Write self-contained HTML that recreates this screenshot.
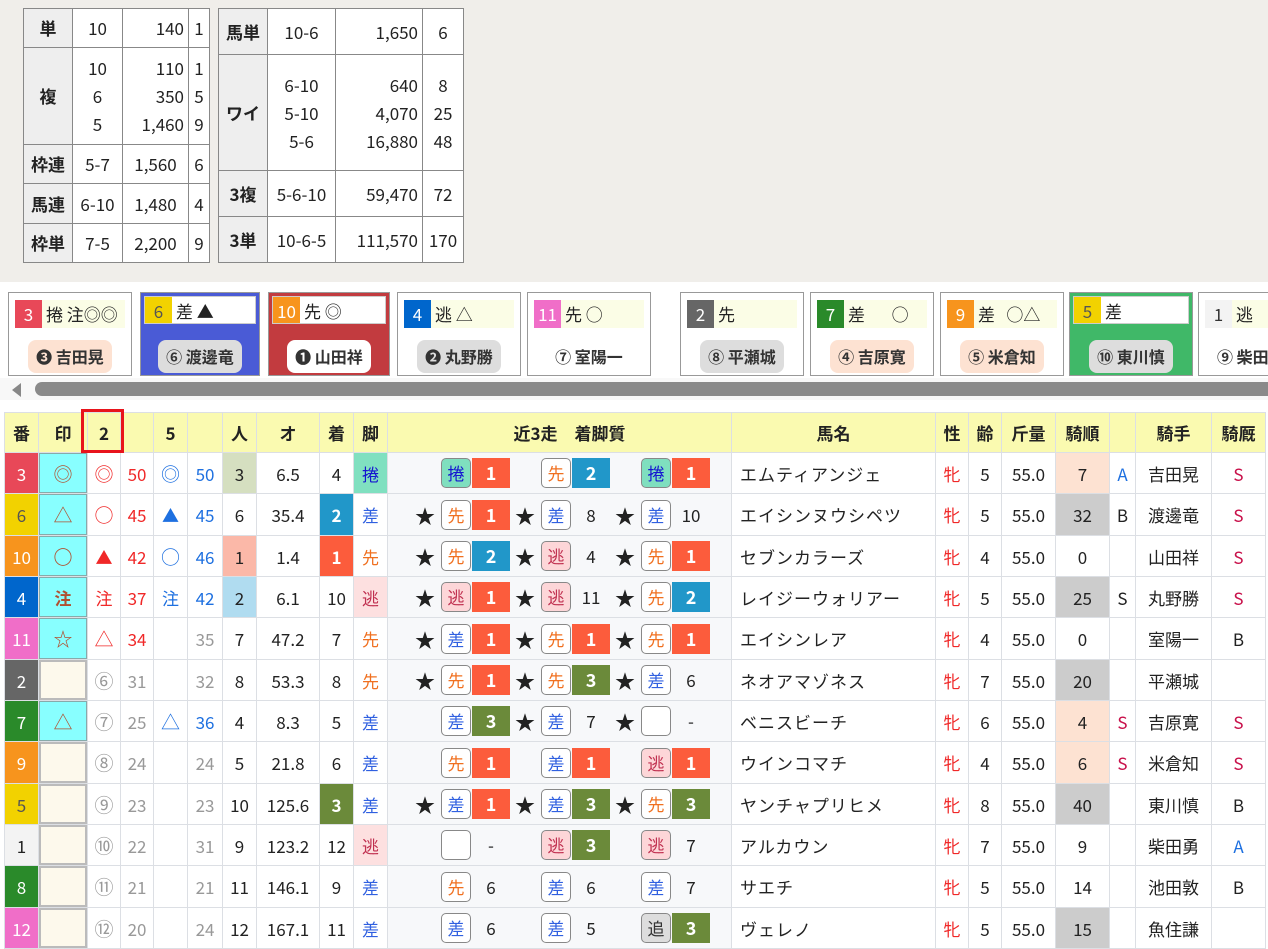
<!DOCTYPE html>
<html><head><meta charset="utf-8">
<style>
*{box-sizing:border-box;margin:0;padding:0}
body{width:1268px;height:949px;overflow:hidden;background:#fff;font-family:"Liberation Sans","Noto Sans CJK JP",sans-serif;color:#222;position:relative}
.top{position:absolute;left:0;top:0;width:1268px;height:282px;background:#f0eeea}
table.pay{position:absolute;top:8px;border-collapse:collapse;background:#fff;font-size:17px;font-family:"Noto Sans CJK JP",sans-serif}
table.pay td{border:1px solid #888;padding:0 4px;line-height:28px;text-align:center}
table.pay td.h{background:#eee;font-weight:bold;text-align:center}
table.pay td.rt{text-align:right}
.card{position:absolute;top:292px;width:124px;height:84px;border:1px solid #999;background:#fff;font-family:"Noto Sans CJK JP",sans-serif}
.card .strip{position:absolute;left:6px;top:7px;width:110px;height:28px;background:#fbfde6;font-size:17px;line-height:28px;white-space:nowrap;overflow:hidden}
.card.sel .strip{left:3px;top:3px;width:116px;background:#fff;border:1px solid #ccc}
.card .num{display:inline-block;width:27px;text-align:center;color:#fff;margin-right:4px}
.card .pill{position:absolute;left:0;right:0;top:47px;text-align:center}
.card .pill span{display:inline-block;height:33px;line-height:33px;padding:0 8px;border-radius:8px;font-size:16px;font-weight:bold;color:#333}
.scroll{position:absolute;left:0;top:378px;width:1268px;height:22px;background:#f8f8f8}
table.main{position:absolute;left:4px;top:412px;border-collapse:collapse;table-layout:fixed;font-family:"Noto Sans CJK JP",sans-serif;font-size:17px}
table.main td{border:1px solid #dcdfe4;text-align:center;padding:0;white-space:nowrap}
table.main tr.hd td{background:#fafab0;font-weight:bold;height:40px}
.hn{color:#fff}
.mk{background:#88ffff;box-shadow:inset 0 0 0 1px #8aa;color:#b05030;font-size:19px}
.em{background:#fdf9ec;box-shadow:inset 0 0 0 2px #bbb}
.red{color:#f02828}.blu{color:#1e70e0}.gry{color:#999}
.cn{font-size:19px}
.n3{background:#f7f8fa;position:relative}
.n3 i{position:absolute;font-style:normal;top:50%;transform:translateY(-50%)}
.st{font-size:20px;color:#222}
.b{width:30px;height:30px;border:1px solid #888;border-radius:5px;line-height:28px;font-size:17px;background:#fff}
.r{width:38px;height:30px;line-height:30px;color:#fff;font-weight:bold;font-size:18px}
.t{width:38px;line-height:30px}
.r1{background:#fc5c3c}.r2{background:#2197c9}.r3{background:#6b8a3a}
.kk{background:#7fdfbf;color:#1515d0}.sk{color:#f07020}.sa{color:#3060e0}.ni{background:#fdd6d8;color:#c03050}.oi{background:#ddd;color:#333}
.ks{background:#80e0c0;color:#1515d0}.kn{background:#fde0e0;color:#c03050}
.pe{background:#fde2d2}.g{background:#ccc}
.S{color:#c8104a}.A{color:#1e70e0}
.nm{text-align:left!important;padding-left:8px!important;letter-spacing:1px}
</style></head><body>
<div class="top"></div>
<table class="pay" style="left:23px">
<tr style="height:39px"><td class="h" style="width:49px">単</td><td style="width:50px">10</td><td class="rt" style="width:66px">140</td><td style="width:21px">1</td></tr>
<tr style="height:97px"><td class="h">複</td><td>10<br>6<br>5</td><td class="rt">110<br>350<br>1,460</td><td>1<br>5<br>9</td></tr>
<tr style="height:39px"><td class="h">枠連</td><td>5-7</td><td>1,560</td><td>6</td></tr>
<tr style="height:40px"><td class="h">馬連</td><td>6-10</td><td>1,480</td><td>4</td></tr>
<tr style="height:39px"><td class="h">枠単</td><td>7-5</td><td>2,200</td><td>9</td></tr>
</table>
<table class="pay" style="left:218px">
<tr style="height:46px"><td class="h" style="width:49px">馬単</td><td style="width:68px">10-6</td><td class="rt" style="width:87px">1,650</td><td style="width:41px">6</td></tr>
<tr style="height:116px"><td class="h">ワイ</td><td>6-10<br>5-10<br>5-6</td><td class="rt">640<br>4,070<br>16,880</td><td>8<br>25<br>48</td></tr>
<tr style="height:46px"><td class="h">3複</td><td>5-6-10</td><td class="rt">59,470</td><td>72</td></tr>
<tr style="height:46px"><td class="h">3単</td><td>10-6-5</td><td class="rt">111,570</td><td>170</td></tr>
</table>

<div class="card" style="left:8px"><div class="strip"><span class="num" style="background:#e84858">3</span>捲 注◎◎</div><div class="pill"><span class="pe">❸ 吉田晃</span></div></div>
<div class="card sel" style="left:140px;width:120px;background:#4a5bd6"><div class="strip" style="width:112px"><span class="num" style="background:#f2d200;color:#555">6</span>差 ▲</div><div class="pill"><span style="background:#ddd">⑥ 渡邊竜</span></div></div>
<div class="card sel" style="left:268px;width:122px;background:#c23b3f"><div class="strip" style="width:114px"><span class="num" style="background:#f7941d">10</span>先 ◎</div><div class="pill"><span style="background:#fff">❶ 山田祥</span></div></div>
<div class="card" style="left:397px"><div class="strip"><span class="num" style="background:#0066cc">4</span>逃 △</div><div class="pill"><span style="background:#ddd">❷ 丸野勝</span></div></div>
<div class="card" style="left:527px"><div class="strip"><span class="num" style="background:#f06ec8">11</span>先 ○</div><div class="pill"><span>⑦ 室陽一</span></div></div>
<div class="card" style="left:680px"><div class="strip"><span class="num" style="background:#666">2</span>先</div><div class="pill"><span style="background:#ddd">⑧ 平瀬城</span></div></div>
<div class="card" style="left:810px"><div class="strip"><span class="num" style="background:#2a8a2a">7</span>差 &nbsp; &nbsp; &nbsp; ○</div><div class="pill"><span class="pe">④ 吉原寛</span></div></div>
<div class="card" style="left:940px"><div class="strip"><span class="num" style="background:#f7941d">9</span>差 &nbsp; ○△</div><div class="pill"><span class="pe">⑤ 米倉知</span></div></div>
<div class="card sel" style="left:1069px;background:#40b868"><div class="strip"><span class="num" style="background:#f2d200;color:#555">5</span>差</div><div class="pill"><span style="background:#ddd">⑩ 東川慎</span></div></div>
<div class="card" style="left:1198px;width:90px"><div class="strip" style="width:90px"><span class="num" style="background:#f3f3f3;color:#333">1</span>逃</div><div class="pill" style="text-align:left;padding-left:10px"><span>⑨ 柴田勇</span></div></div>

<div class="scroll"><div style="position:absolute;left:12px;top:5px;width:0;height:0;border-top:7px solid transparent;border-bottom:7px solid transparent;border-right:9px solid #888"></div><div style="position:absolute;left:35px;top:4px;width:1240px;height:14px;border-radius:7px;background:#8a8a8a"></div></div>

<table class="main">
<colgroup><col style="width:34px"><col style="width:49px"><col style="width:33px"><col style="width:33px"><col style="width:34px"><col style="width:35px"><col style="width:34px"><col style="width:63px"><col style="width:34px"><col style="width:34px"><col style="width:344px"><col style="width:204px"><col style="width:33px"><col style="width:33px"><col style="width:54px"><col style="width:54px"><col style="width:26px"><col style="width:76px"><col style="width:54px"></colgroup>
<tr class="hd"><td>番</td><td>印</td><td>2</td><td></td><td>5</td><td></td><td>人</td><td>オ</td><td>着</td><td>脚</td><td style="padding-left:20px!important">近3走　着脚質</td><td>馬名</td><td>性</td><td>齢</td><td>斤量</td><td>騎順</td><td></td><td>騎手</td><td>騎厩</td></tr>

<tr style="height:41px"><td class="hn" style="background:#e84858">3</td><td class="mk">◎</td><td class="red cn">◎</td><td class="red">50</td><td class="blu cn">◎</td><td class="blu">50</td><td style="background:#d5dfc0">3</td><td>6.5</td><td>4</td><td class="ks">捲</td>
<td class="n3"><i class="b kk" style="left:53px">捲</i><i class="r r1" style="left:84px">1</i><i class="b sk" style="left:153px">先</i><i class="r r2" style="left:184px">2</i><i class="b kk" style="left:253px">捲</i><i class="r r1" style="left:284px">1</i></td>
<td class="nm">エムティアンジェ</td><td class="red">牝</td><td>5</td><td>55.0</td><td class="pe">7</td><td class="A">A</td><td>吉田晃</td><td class="S">S</td></tr>

<tr style="height:42px"><td style="background:#f2d200;color:#555">6</td><td class="mk">△</td><td class="red cn">○</td><td class="red">45</td><td class="blu">▲</td><td class="blu">45</td><td>6</td><td>35.4</td><td class="r2 hn" style="font-weight:bold">2</td><td class="sa">差</td>
<td class="n3"><i class="st" style="left:27px">★</i><i class="b sk" style="left:53px">先</i><i class="r r1" style="left:84px">1</i><i class="st" style="left:127px">★</i><i class="b sa" style="left:153px">差</i><i class="t" style="left:184px">8</i><i class="st" style="left:227px">★</i><i class="b sa" style="left:253px">差</i><i class="t" style="left:284px">10</i></td>
<td class="nm">エイシンヌウシペツ</td><td class="red">牝</td><td>5</td><td>55.0</td><td class="g">32</td><td>B</td><td>渡邊竜</td><td class="S">S</td></tr>

<tr style="height:41px"><td class="hn" style="background:#f7941d">10</td><td class="mk" style="font-weight:bold">○</td><td class="red">▲</td><td class="red">42</td><td class="blu cn">○</td><td class="blu">46</td><td style="background:#fbb8a8">1</td><td>1.4</td><td class="r1 hn" style="font-weight:bold">1</td><td class="sk">先</td>
<td class="n3"><i class="st" style="left:27px">★</i><i class="b sk" style="left:53px">先</i><i class="r r2" style="left:84px">2</i><i class="st" style="left:127px">★</i><i class="b ni" style="left:153px">逃</i><i class="t" style="left:184px">4</i><i class="st" style="left:227px">★</i><i class="b sk" style="left:253px">先</i><i class="r r1" style="left:284px">1</i></td>
<td class="nm">セブンカラーズ</td><td class="red">牝</td><td>4</td><td>55.0</td><td>0</td><td></td><td>山田祥</td><td class="S">S</td></tr>

<tr style="height:41px"><td class="hn" style="background:#0066cc">4</td><td class="mk" style="font-weight:bold;font-size:17px">注</td><td class="red">注</td><td class="red">37</td><td class="blu">注</td><td class="blu">42</td><td style="background:#b0dcf0">2</td><td>6.1</td><td>10</td><td class="kn">逃</td>
<td class="n3"><i class="st" style="left:27px">★</i><i class="b ni" style="left:53px">逃</i><i class="r r1" style="left:84px">1</i><i class="st" style="left:127px">★</i><i class="b ni" style="left:153px">逃</i><i class="t" style="left:184px">11</i><i class="st" style="left:227px">★</i><i class="b sk" style="left:253px">先</i><i class="r r2" style="left:284px">2</i></td>
<td class="nm">レイジーウォリアー</td><td class="red">牝</td><td>5</td><td>55.0</td><td class="g">25</td><td>S</td><td>丸野勝</td><td class="S">S</td></tr>

<tr style="height:42px"><td class="hn" style="background:#f06ec8">11</td><td class="mk">☆</td><td class="red cn">△</td><td class="red">34</td><td></td><td class="gry">35</td><td>7</td><td>47.2</td><td>7</td><td class="sk">先</td>
<td class="n3"><i class="st" style="left:27px">★</i><i class="b sa" style="left:53px">差</i><i class="r r1" style="left:84px">1</i><i class="st" style="left:127px">★</i><i class="b sk" style="left:153px">先</i><i class="r r1" style="left:184px">1</i><i class="st" style="left:227px">★</i><i class="b sk" style="left:253px">先</i><i class="r r1" style="left:284px">1</i></td>
<td class="nm">エイシンレア</td><td class="red">牝</td><td>4</td><td>55.0</td><td>0</td><td></td><td>室陽一</td><td>B</td></tr>

<tr style="height:41px"><td class="hn" style="background:#666">2</td><td class="em"></td><td class="gry cn">⑥</td><td class="gry">31</td><td></td><td class="gry">32</td><td>8</td><td>53.3</td><td>8</td><td class="sk">先</td>
<td class="n3"><i class="st" style="left:27px">★</i><i class="b sk" style="left:53px">先</i><i class="r r1" style="left:84px">1</i><i class="st" style="left:127px">★</i><i class="b sk" style="left:153px">先</i><i class="r r3" style="left:184px">3</i><i class="st" style="left:227px">★</i><i class="b sa" style="left:253px">差</i><i class="t" style="left:284px">6</i></td>
<td class="nm">ネオアマゾネス</td><td class="red">牝</td><td>7</td><td>55.0</td><td class="g">20</td><td></td><td>平瀬城</td><td></td></tr>

<tr style="height:41px"><td class="hn" style="background:#2a8a2a">7</td><td class="mk">△</td><td class="gry cn">⑦</td><td class="gry">25</td><td class="blu cn">△</td><td class="blu">36</td><td>4</td><td>8.3</td><td>5</td><td class="sa">差</td>
<td class="n3"><i class="b sa" style="left:53px">差</i><i class="r r3" style="left:84px">3</i><i class="st" style="left:127px">★</i><i class="b sa" style="left:153px">差</i><i class="t" style="left:184px">7</i><i class="st" style="left:227px">★</i><i class="b" style="left:253px"></i><i class="t" style="left:284px">-</i></td>
<td class="nm">ベニスビーチ</td><td class="red">牝</td><td>6</td><td>55.0</td><td class="pe">4</td><td class="S">S</td><td>吉原寛</td><td class="S">S</td></tr>

<tr style="height:42px"><td class="hn" style="background:#f7941d">9</td><td class="em"></td><td class="gry cn">⑧</td><td class="gry">24</td><td></td><td class="gry">24</td><td>5</td><td>21.8</td><td>6</td><td class="sa">差</td>
<td class="n3"><i class="b sk" style="left:53px">先</i><i class="r r1" style="left:84px">1</i><i class="b sa" style="left:153px">差</i><i class="r r1" style="left:184px">1</i><i class="b ni" style="left:253px">逃</i><i class="r r1" style="left:284px">1</i></td>
<td class="nm">ウインコマチ</td><td class="red">牝</td><td>4</td><td>55.0</td><td class="pe">6</td><td class="S">S</td><td>米倉知</td><td class="S">S</td></tr>

<tr style="height:41px"><td style="background:#f2d200;color:#555">5</td><td class="em"></td><td class="gry cn">⑨</td><td class="gry">23</td><td></td><td class="gry">23</td><td>10</td><td>125.6</td><td class="r3 hn" style="font-weight:bold">3</td><td class="sa">差</td>
<td class="n3"><i class="st" style="left:27px">★</i><i class="b sa" style="left:53px">差</i><i class="r r1" style="left:84px">1</i><i class="st" style="left:127px">★</i><i class="b sa" style="left:153px">差</i><i class="r r3" style="left:184px">3</i><i class="st" style="left:227px">★</i><i class="b sk" style="left:253px">先</i><i class="r r3" style="left:284px">3</i></td>
<td class="nm">ヤンチャプリヒメ</td><td class="red">牝</td><td>8</td><td>55.0</td><td class="g">40</td><td></td><td>東川慎</td><td>B</td></tr>

<tr style="height:41px"><td style="background:#f3f3f3">1</td><td class="em"></td><td class="gry cn">⑩</td><td class="gry">22</td><td></td><td class="gry">31</td><td>9</td><td>123.2</td><td>12</td><td class="kn">逃</td>
<td class="n3"><i class="b" style="left:53px"></i><i class="t" style="left:84px">-</i><i class="b ni" style="left:153px">逃</i><i class="r r3" style="left:184px">3</i><i class="b ni" style="left:253px">逃</i><i class="t" style="left:284px">7</i></td>
<td class="nm">アルカウン</td><td class="red">牝</td><td>7</td><td>55.0</td><td>9</td><td></td><td>柴田勇</td><td class="A">A</td></tr>

<tr style="height:42px"><td class="hn" style="background:#2a8a2a">8</td><td class="em"></td><td class="gry cn">⑪</td><td class="gry">21</td><td></td><td class="gry">21</td><td>11</td><td>146.1</td><td>9</td><td class="sa">差</td>
<td class="n3"><i class="b sk" style="left:53px">先</i><i class="t" style="left:84px">6</i><i class="b sa" style="left:153px">差</i><i class="t" style="left:184px">6</i><i class="b sa" style="left:253px">差</i><i class="t" style="left:284px">7</i></td>
<td class="nm">サエチ</td><td class="red">牝</td><td>5</td><td>55.0</td><td>14</td><td></td><td>池田敦</td><td>B</td></tr>

<tr style="height:41px"><td class="hn" style="background:#f06ec8">12</td><td class="em"></td><td class="gry cn">⑫</td><td class="gry">20</td><td></td><td class="gry">24</td><td>12</td><td>167.1</td><td>11</td><td class="sa">差</td>
<td class="n3"><i class="b sa" style="left:53px">差</i><i class="t" style="left:84px">6</i><i class="b sa" style="left:153px">差</i><i class="t" style="left:184px">5</i><i class="b oi" style="left:253px">追</i><i class="r r3" style="left:284px">3</i></td>
<td class="nm">ヴェレノ</td><td class="red">牝</td><td>5</td><td>55.0</td><td class="g">15</td><td></td><td>魚住謙</td><td></td></tr>
</table>
<div style="position:absolute;left:81px;top:409px;width:43px;height:44px;border:3px solid #e8141c"></div>
</body></html>
